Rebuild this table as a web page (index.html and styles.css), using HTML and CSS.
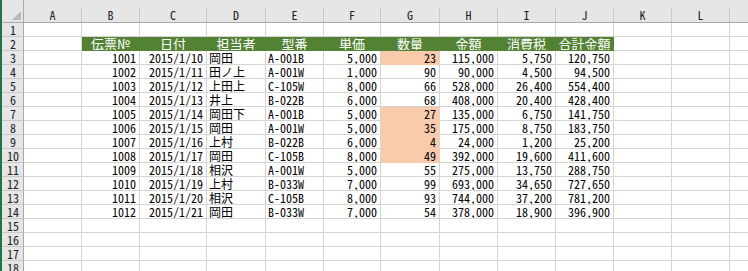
FILE: index.html
```html
<!DOCTYPE html>
<html lang="ja">
<head>
<meta charset="utf-8">
<title>Sheet</title>
<link rel="stylesheet" href="styles.css">
</head>
<body>
<div class="sheet">
  <div class="row hdr">
    <div class="corner"><svg width="9" height="9" viewBox="0 0 9 9"><polygon points="9,0 9,9 0,9" fill="#b8b8b8"/></svg></div>
    <div class="ch"><span>A</span></div><div class="ch"><span>B</span></div><div class="ch"><span>C</span></div><div class="ch"><span>D</span></div><div class="ch"><span>E</span></div><div class="ch"><span>F</span></div><div class="ch"><span>G</span></div><div class="ch"><span>H</span></div><div class="ch"><span>I</span></div><div class="ch"><span>J</span></div><div class="ch"><span>K</span></div><div class="ch"><span>L</span></div><div class="ch last"><span></span></div>
  </div>
  <div class="row"><div class="rh">1</div><div class="c"></div><div class="c"></div><div class="c"></div><div class="c"></div><div class="c"></div><div class="c"></div><div class="c"></div><div class="c"></div><div class="c"></div><div class="c"></div><div class="c"></div><div class="c"></div><div class="c e"></div></div>
  <div class="row"><div class="rh">2</div><div class="c"></div><div class="c g">伝票№</div><div class="c g">日付</div><div class="c g">担当者</div><div class="c g">型番</div><div class="c g">単価</div><div class="c g">数量</div><div class="c g">金額</div><div class="c g">消費税</div><div class="c g">合計金額</div><div class="c"></div><div class="c"></div><div class="c e"></div></div>
  <div class="row"><div class="rh">3</div><div class="c"></div><div class="c n">1001</div><div class="c n">2015/1/10</div><div class="c">岡田</div><div class="c">A-001B</div><div class="c n">5,000</div><div class="c n o">23</div><div class="c n">115,000</div><div class="c n">5,750</div><div class="c n">120,750</div><div class="c"></div><div class="c"></div><div class="c e"></div></div>
  <div class="row"><div class="rh">4</div><div class="c"></div><div class="c n">1002</div><div class="c n">2015/1/11</div><div class="c">田ノ上</div><div class="c">A-001W</div><div class="c n">1,000</div><div class="c n">90</div><div class="c n">90,000</div><div class="c n">4,500</div><div class="c n">94,500</div><div class="c"></div><div class="c"></div><div class="c e"></div></div>
  <div class="row"><div class="rh">5</div><div class="c"></div><div class="c n">1003</div><div class="c n">2015/1/12</div><div class="c">上田上</div><div class="c">C-105W</div><div class="c n">8,000</div><div class="c n">66</div><div class="c n">528,000</div><div class="c n">26,400</div><div class="c n">554,400</div><div class="c"></div><div class="c"></div><div class="c e"></div></div>
  <div class="row"><div class="rh">6</div><div class="c"></div><div class="c n">1004</div><div class="c n">2015/1/13</div><div class="c">井上</div><div class="c">B-022B</div><div class="c n">6,000</div><div class="c n">68</div><div class="c n">408,000</div><div class="c n">20,400</div><div class="c n">428,400</div><div class="c"></div><div class="c"></div><div class="c e"></div></div>
  <div class="row"><div class="rh">7</div><div class="c"></div><div class="c n">1005</div><div class="c n">2015/1/14</div><div class="c">岡田下</div><div class="c">A-001B</div><div class="c n">5,000</div><div class="c n o">27</div><div class="c n">135,000</div><div class="c n">6,750</div><div class="c n">141,750</div><div class="c"></div><div class="c"></div><div class="c e"></div></div>
  <div class="row"><div class="rh">8</div><div class="c"></div><div class="c n">1006</div><div class="c n">2015/1/15</div><div class="c">岡田</div><div class="c">A-001W</div><div class="c n">5,000</div><div class="c n o">35</div><div class="c n">175,000</div><div class="c n">8,750</div><div class="c n">183,750</div><div class="c"></div><div class="c"></div><div class="c e"></div></div>
  <div class="row"><div class="rh">9</div><div class="c"></div><div class="c n">1007</div><div class="c n">2015/1/16</div><div class="c">上村</div><div class="c">B-022B</div><div class="c n">6,000</div><div class="c n o">4</div><div class="c n">24,000</div><div class="c n">1,200</div><div class="c n">25,200</div><div class="c"></div><div class="c"></div><div class="c e"></div></div>
  <div class="row"><div class="rh">10</div><div class="c"></div><div class="c n">1008</div><div class="c n">2015/1/17</div><div class="c">岡田</div><div class="c">C-105B</div><div class="c n">8,000</div><div class="c n o">49</div><div class="c n">392,000</div><div class="c n">19,600</div><div class="c n">411,600</div><div class="c"></div><div class="c"></div><div class="c e"></div></div>
  <div class="row"><div class="rh">11</div><div class="c"></div><div class="c n">1009</div><div class="c n">2015/1/18</div><div class="c">相沢</div><div class="c">A-001W</div><div class="c n">5,000</div><div class="c n">55</div><div class="c n">275,000</div><div class="c n">13,750</div><div class="c n">288,750</div><div class="c"></div><div class="c"></div><div class="c e"></div></div>
  <div class="row"><div class="rh">12</div><div class="c"></div><div class="c n">1010</div><div class="c n">2015/1/19</div><div class="c">上村</div><div class="c">B-033W</div><div class="c n">7,000</div><div class="c n">99</div><div class="c n">693,000</div><div class="c n">34,650</div><div class="c n">727,650</div><div class="c"></div><div class="c"></div><div class="c e"></div></div>
  <div class="row"><div class="rh">13</div><div class="c"></div><div class="c n">1011</div><div class="c n">2015/1/20</div><div class="c">相沢</div><div class="c">C-105B</div><div class="c n">8,000</div><div class="c n">93</div><div class="c n">744,000</div><div class="c n">37,200</div><div class="c n">781,200</div><div class="c"></div><div class="c"></div><div class="c e"></div></div>
  <div class="row"><div class="rh">14</div><div class="c"></div><div class="c n">1012</div><div class="c n">2015/1/21</div><div class="c">岡田</div><div class="c">B-033W</div><div class="c n">7,000</div><div class="c n">54</div><div class="c n">378,000</div><div class="c n">18,900</div><div class="c n">396,900</div><div class="c"></div><div class="c"></div><div class="c e"></div></div>
  <div class="row"><div class="rh">15</div><div class="c"></div><div class="c"></div><div class="c"></div><div class="c"></div><div class="c"></div><div class="c"></div><div class="c"></div><div class="c"></div><div class="c"></div><div class="c"></div><div class="c"></div><div class="c"></div><div class="c e"></div></div>
  <div class="row"><div class="rh">16</div><div class="c"></div><div class="c"></div><div class="c"></div><div class="c"></div><div class="c"></div><div class="c"></div><div class="c"></div><div class="c"></div><div class="c"></div><div class="c"></div><div class="c"></div><div class="c"></div><div class="c e"></div></div>
  <div class="row"><div class="rh">17</div><div class="c"></div><div class="c"></div><div class="c"></div><div class="c"></div><div class="c"></div><div class="c"></div><div class="c"></div><div class="c"></div><div class="c"></div><div class="c"></div><div class="c"></div><div class="c"></div><div class="c e"></div></div>
  <div class="row"><div class="rh">18</div><div class="c"></div><div class="c"></div><div class="c"></div><div class="c"></div><div class="c"></div><div class="c"></div><div class="c"></div><div class="c"></div><div class="c"></div><div class="c"></div><div class="c"></div><div class="c"></div><div class="c e"></div></div>
</div>
</body>
</html>
```
FILE: styles.css
```css
html, body {
  margin: 0;
  padding: 0;
  background: #ffffff;
  overflow: hidden;
}
.sheet {
  width: 746px;
  border-left: 2px solid #217346;
  font-family: "Noto Sans CJK JP", "Noto Sans CJK SC", sans-serif;
  font-size: 12px;
  font-feature-settings: "hwid" 1;
  color: #000;
}
.row {
  display: grid;
  grid-template-columns: 22px 58px 58px 67px 59px 58px 57px 59px 58px 58px 58px 58px 58px 1fr;
  height: 14px;
}
.row.hdr {
  height: 23px;
  background: #e6e6e6;
}
.corner {
  box-sizing: border-box;
  height: 23px;
  border-right: 1px solid #a8a8a8;
  border-bottom: 1px solid #a8a8a8;
  display: flex;
  justify-content: flex-end;
  align-items: flex-end;
  padding: 0 2px 2px 0;
}
.corner svg { display: block; }
.ch {
  box-sizing: border-box;
  height: 23px;
  padding-top: 8px;
  border-bottom: 1px solid #a8a8a8;
}
.ch span {
  display: block;
  box-sizing: border-box;
  height: 14px;
  line-height: 14px;
  text-align: center;
  border-right: 1px solid #c8c8c8;
  font-family: "Noto Sans CJK JP", sans-serif;
  font-size: 12px;
  color: #222;
}
.ch.last span { border-right: none; }
.rh {
  box-sizing: border-box;
  height: 14px;
  background: #e6e6e6;
  border-right: 1px solid #a8a8a8;
  border-bottom: 1px solid #c8c8c8;
  text-align: center;
  line-height: 13px;
  color: #222;
  padding-left: 1px;
}
.c {
  box-sizing: border-box;
  height: 14px;
  border-right: 1px solid #d4d4d4;
  border-bottom: 1px solid #d4d4d4;
  line-height: 13px;
  padding: 0 2px 0 2px;
  white-space: nowrap;
  overflow: hidden;
}
.c.e { border-right: none; }
.c.n { text-align: right; padding-right: 3px; }
.c.g {
  background: #548235;
  border-color: #548235;
  color: #ffffff;
  text-align: center;
  padding: 0;
  font-size: 13px;
}
.c.o {
  background: #f8cbad;
  border-color: #f8cbad;
}
```
